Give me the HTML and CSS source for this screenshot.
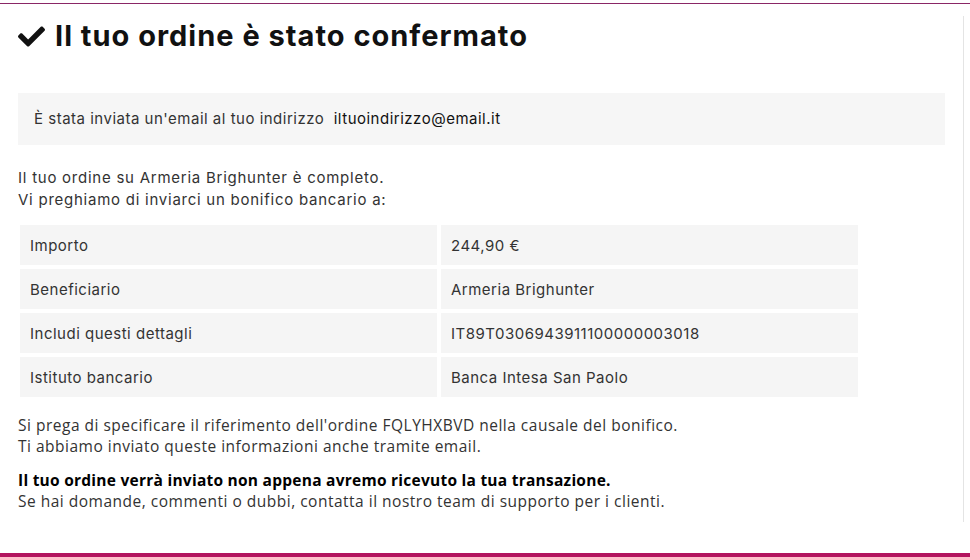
FILE: index.html
```html
<!DOCTYPE html>
<html lang="it">
<head>
  <meta charset="UTF-8">
  <title>Ordine confermato - Armeria Brighunter</title>
  <link rel="stylesheet" href="styles.css">
</head>
<body>
  <div class="top-rule"></div>
  <div class="main">
    <h1 class="title">
      <svg class="check" viewBox="0 0 512 512" aria-hidden="true"><path d="M173.9 439.4l-166.4-166.4c-10-10-10-26.2 0-36.2l36.2-36.2c10-10 26.2-10 36.2 0L192 312.7 432.1 72.6c10-10 26.2-10 36.2 0l36.2 36.2c10 10 10 26.2 0 36.2l-294.4 294.4c-10 10-26.2 10-36.2 0z"/></svg>
      Il tuo ordine è stato confermato
    </h1>

    <div class="mail-box">È stata inviata un'email al tuo indirizzo&nbsp; <span>iltuoindirizzo@email.it</span></div>

    <p class="intro">Il tuo ordine su Armeria Brighunter è completo.<br>Vi preghiamo di inviarci un bonifico bancario a:</p>

    <table class="bank">
      <tr><td>Importo</td><td>244,90 €</td></tr>
      <tr><td>Beneficiario</td><td>Armeria Brighunter</td></tr>
      <tr><td>Includi questi dettagli</td><td>IT89T0306943911100000003018</td></tr>
      <tr><td>Istituto bancario</td><td>Banca Intesa San Paolo</td></tr>
    </table>

    <p class="note">Si prega di specificare il riferimento dell'ordine FQLYHXBVD nella causale del bonifico.<br>Ti abbiamo inviato queste informazioni anche tramite email.</p>

    <p class="note"><strong>Il tuo ordine verrà inviato non appena avremo ricevuto la tua transazione.</strong><br>Se hai domande, commenti o dubbi, contatta il nostro team di supporto per i clienti.</p>
  </div>
  <div class="bottom-bar"></div>
</body>
</html>
```

FILE: styles.css
```css
body { margin: 0; background: #fff; color: #222; font-family: Inter, "Open Sans", sans-serif; }
.top-rule { margin-top: 3px; height: 1px; background: #8a2766; }
.main { width: 927px; height: 506px; margin-top: 12px; padding: 0 18px; border-right: 1px solid #e4e4e4; }
.title { display: flex; align-items: center; gap: 10px; margin: 0; padding-top: 3px; font-size: 29px; font-weight: 700; letter-spacing: 1px; color: #111; line-height: 34px; }
.check { width: 27px; height: 27px; fill: #111; }
.mail-box { margin-top: 40px; height: 52px; line-height: 52px; padding-left: 16px; background: #f6f6f6; font-size: 15px; letter-spacing: 0.5px; color: #333; }
.mail-box span { color: #111; }
.intro { margin: 22px 0 0; font-size: 15px; letter-spacing: 0.75px; line-height: 22px; color: #333; }
.bank { margin: 10px 0 0 -2px; border-spacing: 4px; font-size: 15px; letter-spacing: 0.5px; color: #333; }
.bank td { width: 407px; height: 40px; padding: 0 0 0 10px; background: #f5f5f5; }
.note { margin: 14px 0 0; font-family: "Open Sans", sans-serif; font-size: 15.5px; line-height: 21px; color: #333; letter-spacing: 0.5px; }
.note + .note { margin-top: 13px; }
.note strong { color: #000; letter-spacing: 0.25px; }
.bottom-bar { margin-top: 31px; height: 4px; background: #b3145f; }
```
